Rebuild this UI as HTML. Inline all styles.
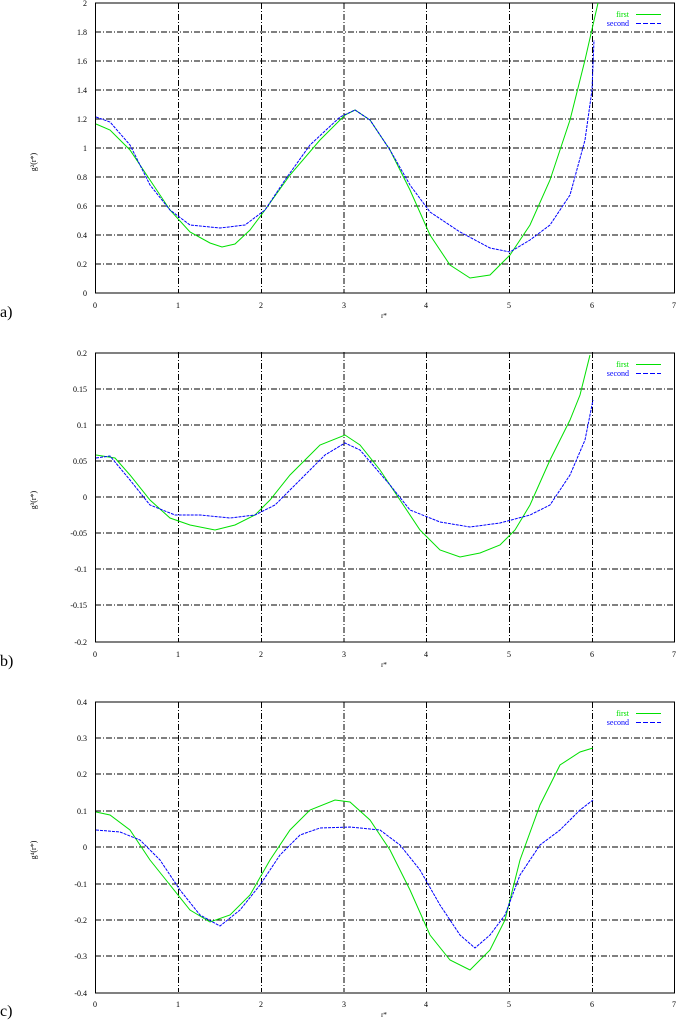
<!DOCTYPE html>
<html><head><style>body{margin:0;background:#fff}svg{display:block}text{font-family:"Liberation Serif",serif}</style></head><body>
<svg width="678" height="1020" viewBox="0 0 678 1020" xmlns="http://www.w3.org/2000/svg">
<defs>
<g id="vg" stroke="#000" stroke-width="1" stroke-dasharray="6,2,1,2" fill="none">
<line x1="178.5" y1="0" x2="178.5" y2="290"/><line x1="261.5" y1="0" x2="261.5" y2="290"/><line x1="344" y1="0" x2="344" y2="290"/><line x1="426.5" y1="0" x2="426.5" y2="290"/><line x1="509.5" y1="0" x2="509.5" y2="290"/><line x1="592.5" y1="0" x2="592.5" y2="290"/>
</g>
<g id="xl" font-size="8" text-anchor="middle">
<text x="95" y="305">0</text><text x="178" y="305">1</text><text x="261" y="305">2</text><text x="344" y="305">3</text><text x="426" y="305">4</text><text x="509" y="305">5</text><text x="592" y="305">6</text><text x="674" y="305">7</text>
<text x="384" y="315" font-size="7">r*</text>
</g>
</defs>
<g transform="translate(0,3)"><use href="#vg"/><use href="#xl"/></g>
<g stroke="#000" stroke-dasharray="6,2,1,2" fill="none">
<line x1="95" x2="674" y1="32" y2="32"/><line x1="95" x2="674" y1="61" y2="61"/><line x1="95" x2="674" y1="90" y2="90"/><line x1="95" x2="674" y1="119" y2="119"/><line x1="95" x2="674" y1="148" y2="148"/><line x1="95" x2="674" y1="177" y2="177"/><line x1="95" x2="674" y1="206" y2="206"/><line x1="95" x2="674" y1="235" y2="235"/><line x1="95" x2="674" y1="264" y2="264"/>
</g>
<rect x="95.5" y="3" width="579" height="290" fill="none" stroke="#000"/>
<g font-size="8" text-anchor="end">
<text x="87" y="6">2</text><text x="87" y="35">1.8</text><text x="87" y="64">1.6</text><text x="87" y="93">1.4</text><text x="87" y="122">1.2</text><text x="87" y="151">1</text><text x="87" y="180">0.8</text><text x="87" y="209">0.6</text><text x="87" y="238">0.4</text><text x="87" y="267">0.2</text><text x="87" y="296">0</text>
</g>
<polyline fill="none" stroke="#00e000" points="96,124 110,130 130,150 150,180 170,210 190,232 210,243 222,247 235,244 250,230 265,210 290,175 320,140 345,115 355,110 370,120 390,150 410,190 430,235 450,265 470,278 490,275 510,255 530,225 550,180 570,120 585,60 598,3"/>
<polyline fill="none" stroke="#0000ff" stroke-dasharray="3,1" points="96,117 110,122 130,145 150,185 170,210 190,225 220,228 245,225 265,210 285,180 310,145 340,117 355,110 370,120 390,150 410,185 430,212 460,232 490,248 510,252 530,240 550,225 570,195 585,140 592,90 594,40"/>
<g transform="translate(0,352)"><use href="#vg"/><use href="#xl"/></g>
<g stroke="#000" stroke-dasharray="6,2,1,2" fill="none">
<line x1="95" x2="674" y1="389" y2="389"/><line x1="95" x2="674" y1="425" y2="425"/><line x1="95" x2="674" y1="461" y2="461"/><line x1="95" x2="674" y1="497" y2="497"/><line x1="95" x2="674" y1="533" y2="533"/><line x1="95" x2="674" y1="569" y2="569"/><line x1="95" x2="674" y1="605" y2="605"/>
</g>
<rect x="95.5" y="353" width="579" height="289" fill="none" stroke="#000"/>
<g font-size="8" text-anchor="end">
<text x="87" y="356">0.2</text><text x="87" y="392">0.15</text><text x="87" y="428">0.1</text><text x="87" y="464">0.05</text><text x="87" y="500">0</text><text x="87" y="536">-0.05</text><text x="87" y="572">-0.1</text><text x="87" y="608">-0.15</text><text x="87" y="645">-0.2</text>
</g>
<polyline fill="none" stroke="#00e000" points="96,455 115,458 130,475 150,500 170,518 190,525 215,530 235,525 255,515 270,500 290,475 320,445 345,435 360,445 380,470 400,500 420,530 440,550 460,557 480,553 500,545 515,530 530,505 550,460 570,420 580,395 590,355"/>
<polyline fill="none" stroke="#0000ff" stroke-dasharray="3,1" points="96,458 110,456 130,480 150,505 175,515 200,515 230,518 255,515 275,505 300,480 325,455 345,443 360,450 390,485 410,510 440,522 470,527 500,523 530,515 550,505 570,475 585,440 593,400"/>
<g transform="translate(0,702)"><use href="#vg"/><use href="#xl"/></g>
<g stroke="#000" stroke-dasharray="6,2,1,2" fill="none">
<line x1="95" x2="674" y1="738" y2="738"/><line x1="95" x2="674" y1="774" y2="774"/><line x1="95" x2="674" y1="811" y2="811"/><line x1="95" x2="674" y1="847" y2="847"/><line x1="95" x2="674" y1="884" y2="884"/><line x1="95" x2="674" y1="920" y2="920"/><line x1="95" x2="674" y1="956" y2="956"/>
</g>
<rect x="95.5" y="702" width="579" height="291" fill="none" stroke="#000"/>
<g font-size="8" text-anchor="end">
<text x="87" y="705">0.4</text><text x="87" y="741">0.3</text><text x="87" y="777">0.2</text><text x="87" y="814">0.1</text><text x="87" y="850">0</text><text x="87" y="887">-0.1</text><text x="87" y="923">-0.2</text><text x="87" y="959">-0.3</text><text x="87" y="996">-0.4</text>
</g>
<polyline fill="none" stroke="#00e000" points="96,812 110,815 130,830 150,860 170,885 190,910 210,922 230,915 250,895 270,860 290,830 310,810 335,800 350,802 370,820 390,850 410,890 430,935 450,960 470,970 490,950 505,920 520,860 540,805 560,765 580,752 593,748"/>
<polyline fill="none" stroke="#0000ff" stroke-dasharray="3,1" points="96,830 120,832 140,840 160,860 180,890 200,915 220,926 240,910 260,885 280,855 300,835 320,828 350,827 380,830 400,845 420,870 440,905 460,935 475,948 490,935 505,915 520,875 540,845 560,830 580,810 593,800"/>
<g font-size="8" text-anchor="end">
<text x="629" y="17" fill="#00e000">first</text><text x="629" y="26" fill="#0000ff">second</text>
<text x="629" y="367" fill="#00e000">first</text><text x="629" y="376" fill="#0000ff">second</text>
<text x="629" y="716" fill="#00e000">first</text><text x="629" y="725" fill="#0000ff">second</text>
</g>
<g stroke-width="1">
<line x1="636" x2="661" y1="14.5" y2="14.5" stroke="#00e000"/><line x1="636" x2="661" y1="23.5" y2="23.5" stroke="#0000ff" stroke-dasharray="5,2"/>
<line x1="636" x2="661" y1="364.5" y2="364.5" stroke="#00e000"/><line x1="636" x2="661" y1="373.5" y2="373.5" stroke="#0000ff" stroke-dasharray="5,2"/>
<line x1="636" x2="661" y1="713.5" y2="713.5" stroke="#00e000"/><line x1="636" x2="661" y1="722.5" y2="722.5" stroke="#0000ff" stroke-dasharray="5,2"/>
</g>
<g font-size="8"><text transform="translate(36,162) rotate(-90)" text-anchor="middle">g²(r*)</text>
<text transform="translate(36,500) rotate(-90)" text-anchor="middle">g³(r*)</text>
<text transform="translate(36,850) rotate(-90)" text-anchor="middle">g⁴(r*)</text></g>
<g font-size="16"><text x="0" y="317">a)</text><text x="0" y="666">b)</text><text x="0" y="1016">c)</text></g>
</svg>
</body></html>
